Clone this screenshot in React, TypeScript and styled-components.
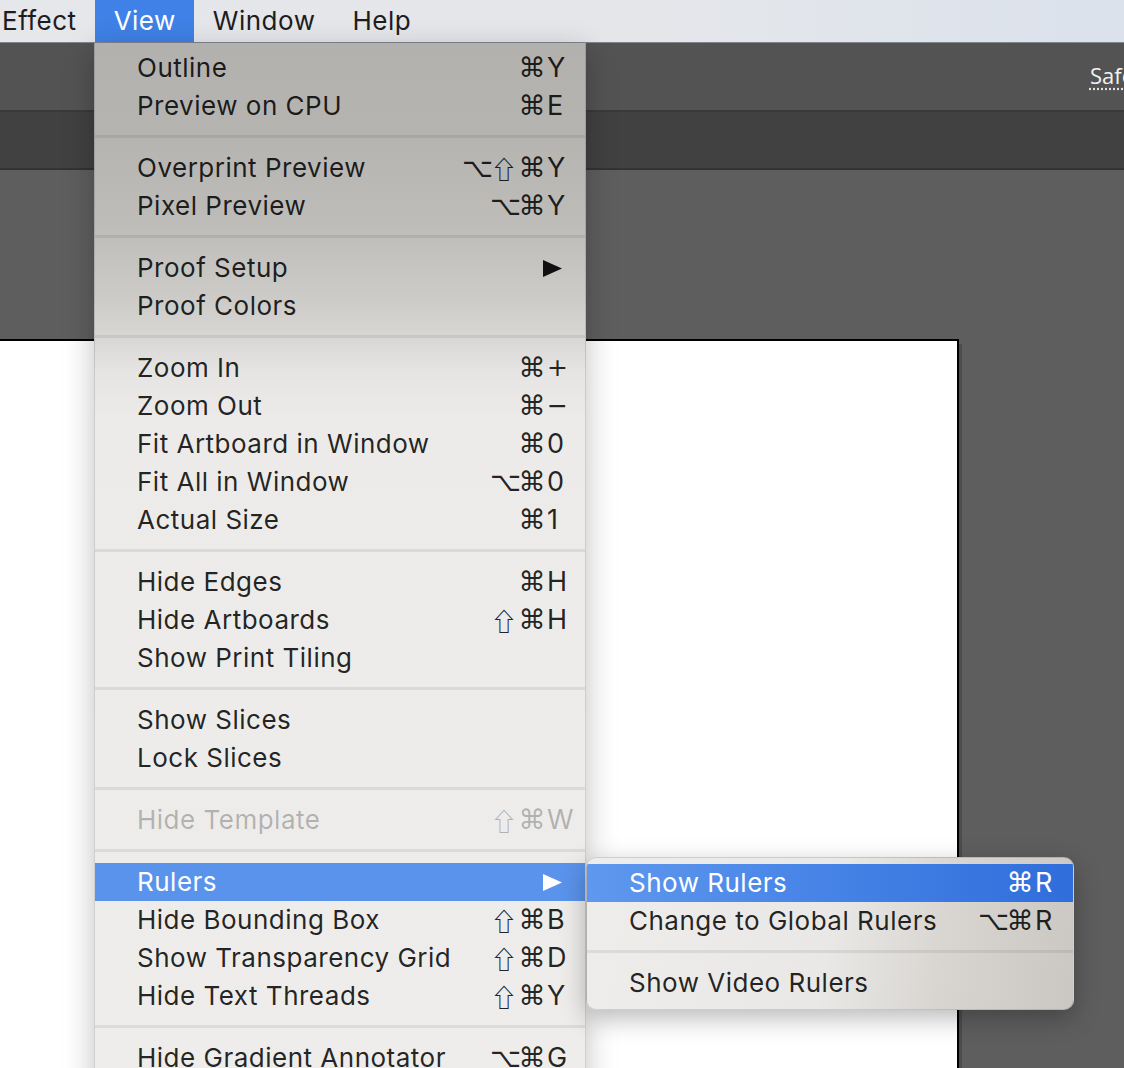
import React from "react";
import styled, { createGlobalStyle, css } from "styled-components";

const GlobalStyle = createGlobalStyle`
  html, body { margin: 0; padding: 0; background: #5e5e5e; overflow: hidden; }
  * { box-sizing: border-box; }
`;

const UI_FONT = `Inter, "Noto Sans", "DejaVu Sans", sans-serif`;
const SYM_FONT = `"DejaVu Sans", Inter, sans-serif`;
const SHIFT_FONT = `"Noto Sans CJK JP", "DejaVu Sans", sans-serif`;

type Item = {
  label: string;
  mods?: string;
  keyName?: string;
  submenu?: boolean;
  disabled?: boolean;
  active?: boolean;
};

const groups: Item[][] = [
  [
    { label: "Outline", mods: "⌘", keyName: "Y" },
    { label: "Preview on CPU", mods: "⌘", keyName: "E" },
  ],
  [
    { label: "Overprint Preview", mods: "⌥⇧⌘", keyName: "Y" },
    { label: "Pixel Preview", mods: "⌥⌘", keyName: "Y" },
  ],
  [{ label: "Proof Setup", submenu: true }, { label: "Proof Colors" }],
  [
    { label: "Zoom In", mods: "⌘", keyName: "+" },
    { label: "Zoom Out", mods: "⌘", keyName: "−" },
    { label: "Fit Artboard in Window", mods: "⌘", keyName: "0" },
    { label: "Fit All in Window", mods: "⌥⌘", keyName: "0" },
    { label: "Actual Size", mods: "⌘", keyName: "1" },
  ],
  [
    { label: "Hide Edges", mods: "⌘", keyName: "H" },
    { label: "Hide Artboards", mods: "⇧⌘", keyName: "H" },
    { label: "Show Print Tiling" },
  ],
  [{ label: "Show Slices" }, { label: "Lock Slices" }],
  [{ label: "Hide Template", mods: "⇧⌘", keyName: "W", disabled: true }],
  [
    { label: "Rulers", submenu: true, active: true },
    { label: "Hide Bounding Box", mods: "⇧⌘", keyName: "B" },
    { label: "Show Transparency Grid", mods: "⇧⌘", keyName: "D" },
    { label: "Hide Text Threads", mods: "⇧⌘", keyName: "Y" },
  ],
  [{ label: "Hide Gradient Annotator", mods: "⌥⌘", keyName: "G" }],
];

const subGroups: Item[][] = [
  [
    { label: "Show Rulers", mods: "⌘", keyName: "R", active: true },
    { label: "Change to Global Rulers", mods: "⌥⌘", keyName: "R" },
  ],
  [{ label: "Show Video Rulers" }],
];

const Screen = styled.div`
  position: relative;
  width: 1124px;
  height: 1068px;
  overflow: hidden;
  display: flex;
  flex-direction: column;
  background: #5e5e5e;
  font-family: ${UI_FONT};
`;

const MenuBar = styled.div`
  height: 43px;
  flex: none;
  display: flex;
  align-items: stretch;
  background: linear-gradient(to right, #e6e7ea 0%, #e4e6ea 60%, #dbe2ec 100%);
  border-bottom: 1px solid #80858d;
`;

const MenuTitle = styled.div<{ $active?: boolean; $lead?: number }>`
  display: flex;
  align-items: center;
  padding: 0 18px 1px 19px;
  margin-left: ${(p) => (p.$lead ? `${p.$lead}px` : "0")};
  font-size: 26px;
  letter-spacing: 0.5px;
  color: ${(p) => (p.$active ? "#ffffff" : "#1d1d1f")};
  background: ${(p) => (p.$active ? "#3f81e6" : "transparent")};
  white-space: nowrap;
`;

const Toolbar = styled.div`
  height: 69px;
  flex: none;
  display: flex;
  align-items: center;
  justify-content: flex-end;
  padding-bottom: 4px;
  background: #535353;
  border-bottom: 2px solid #3a3a3a;
`;

const SafeLabel = styled.span`
  margin-right: -10px;
  font-family: "Open Sans", "Noto Sans", sans-serif;
  font-size: 22px;
  color: #f2f2f2;
  text-decoration: underline dotted #e0e0e0;
  text-underline-offset: 5px;
  white-space: nowrap;
`;

const SubToolbar = styled.div`
  height: 58px;
  flex: none;
  background: #414141;
  border-bottom: 2px solid #333333;
`;

const Canvas = styled.div`
  flex: 1;
  background: #5e5e5e;
  padding-top: 169px;
  overflow: hidden;
`;

const Artboard = styled.div`
  margin-left: -20px;
  width: 979px;
  height: 900px;
  background: #ffffff;
  border-top: 2px solid #000;
  border-right: 2px solid #000;
  box-shadow: 3px 5px 0 #4c4c4c;
`;

const MenuPanel = styled.div<{ $sub?: boolean }>`
  position: absolute;
  display: flex;
  flex-direction: column;
  ${(p) =>
    p.$sub
      ? css`
          left: 586px;
          top: 857px;
          width: 488px;
          padding: 6px 0 7px;
          border-radius: 10px;
          background: linear-gradient(
            100deg,
            #eeedeb 0%,
            #e9e8e6 50%,
            #d9d6d2 72%,
            #cac7c3 100%
          );
          border: 1px solid rgba(0, 0, 0, 0.12);
          box-shadow: 0 8px 26px rgba(0, 0, 0, 0.28);
          overflow: hidden;
        `
      : css`
          left: 94px;
          top: 43px;
          width: 492px;
          padding: 6px 0 40px;
          background: linear-gradient(
            to bottom,
            #b3b1ae 0px,
            #b6b4b1 90px,
            #bebcb9 180px,
            #cdccc9 260px,
            #dad9d7 300px,
            #e6e5e3 330px,
            #ecebe9 380px,
            #eeedeb 100%
          );
          border-left: 1px solid rgba(0, 0, 0, 0.12);
          border-right: 1px solid rgba(0, 0, 0, 0.12);
          box-shadow: 0 8px 28px rgba(0, 0, 0, 0.25);
        `}
`;

const Row = styled.div<{ $active?: boolean; $disabled?: boolean; $sub?: boolean }>`
  height: 38px;
  display: grid;
  grid-template-columns: 1fr auto 26px;
  align-items: center;
  padding: 0 13px 0 42px;
  font-size: 26px;
  letter-spacing: 0.5px;
  line-height: 38px;
  white-space: nowrap;
  color: ${(p) =>
    p.$active ? "#ffffff" : p.$disabled ? "rgba(0,0,0,0.26)" : "rgba(0,0,0,0.86)"};
  background: ${(p) =>
    p.$active
      ? p.$sub
        ? "linear-gradient(to right, #5f98ee 0%, #4683e6 50%, #2f6ddb 100%)"
        : "#5a93eb"
      : "transparent"};
`;

const Label = styled.span``;

const Mods = styled.span`
  display: flex;
  justify-content: flex-end;
  align-items: center;
`;

const Mod = styled.span<{ $shift?: boolean }>`
  display: inline-block;
  width: 28px;
  text-align: center;
  font-family: ${(p) => (p.$shift ? SHIFT_FONT : SYM_FONT)};
  font-size: ${(p) => (p.$shift ? "25px" : "27px")};
  letter-spacing: 0;
  transform: ${(p) => (p.$shift ? "scaleX(1.12)" : "none")};
`;

const KeyCap = styled.span<{ $sym?: boolean }>`
  padding-left: 1px;
  font-family: ${(p) => (p.$sym ? SYM_FONT : "inherit")};
  font-size: ${(p) => (p.$sym ? "25px" : "27px")};
`;

const Arrow = styled.svg`
  grid-column: 2 / 4;
  justify-self: end;
  margin-right: 10px;
  width: 19px;
  height: 17px;
`;

const Separator = styled.div`
  height: 3px;
  margin: 10px 0 11px;
  background: rgba(0, 0, 0, 0.075);
  flex: none;
`;

function MenuRow({ item, sub }: { item: Item; sub?: boolean }) {
  const k = item.keyName || "";
  return (
    <Row $active={item.active} $disabled={item.disabled} $sub={sub}>
      <Label>{item.label}</Label>
      {item.submenu ? (
        <Arrow viewBox="0 0 19 17">
          <polygon points="0,0 19,8.5 0,17" fill={item.active ? "#ffffff" : "#111111"} />
        </Arrow>
      ) : (
        <>
          <Mods>
            {Array.from(item.mods || "").map((m, i) => (
              <Mod key={i} $shift={m === "⇧"}>
                {m}
              </Mod>
            ))}
          </Mods>
          <KeyCap $sym={k === "+" || k === "−"}>{k}</KeyCap>
        </>
      )}
    </Row>
  );
}

function Menu({ data, sub }: { data: Item[][]; sub?: boolean }) {
  return (
    <MenuPanel $sub={sub}>
      {data.map((g, gi) => (
        <React.Fragment key={gi}>
          {gi > 0 && <Separator />}
          {g.map((it) => (
            <MenuRow key={it.label} item={it} sub={sub} />
          ))}
        </React.Fragment>
      ))}
    </MenuPanel>
  );
}

export default function App() {
  return (
    <>
      <GlobalStyle />
      <Screen>
        <MenuBar>
          <MenuTitle $lead={-17}>Effect</MenuTitle>
          <MenuTitle $active>View</MenuTitle>
          <MenuTitle>Window</MenuTitle>
          <MenuTitle>Help</MenuTitle>
        </MenuBar>
        <Toolbar>
          <SafeLabel>Safe</SafeLabel>
        </Toolbar>
        <SubToolbar />
        <Canvas>
          <Artboard />
        </Canvas>
        <Menu data={groups} />
        <Menu data={subGroups} sub />
      </Screen>
    </>
  );
}
